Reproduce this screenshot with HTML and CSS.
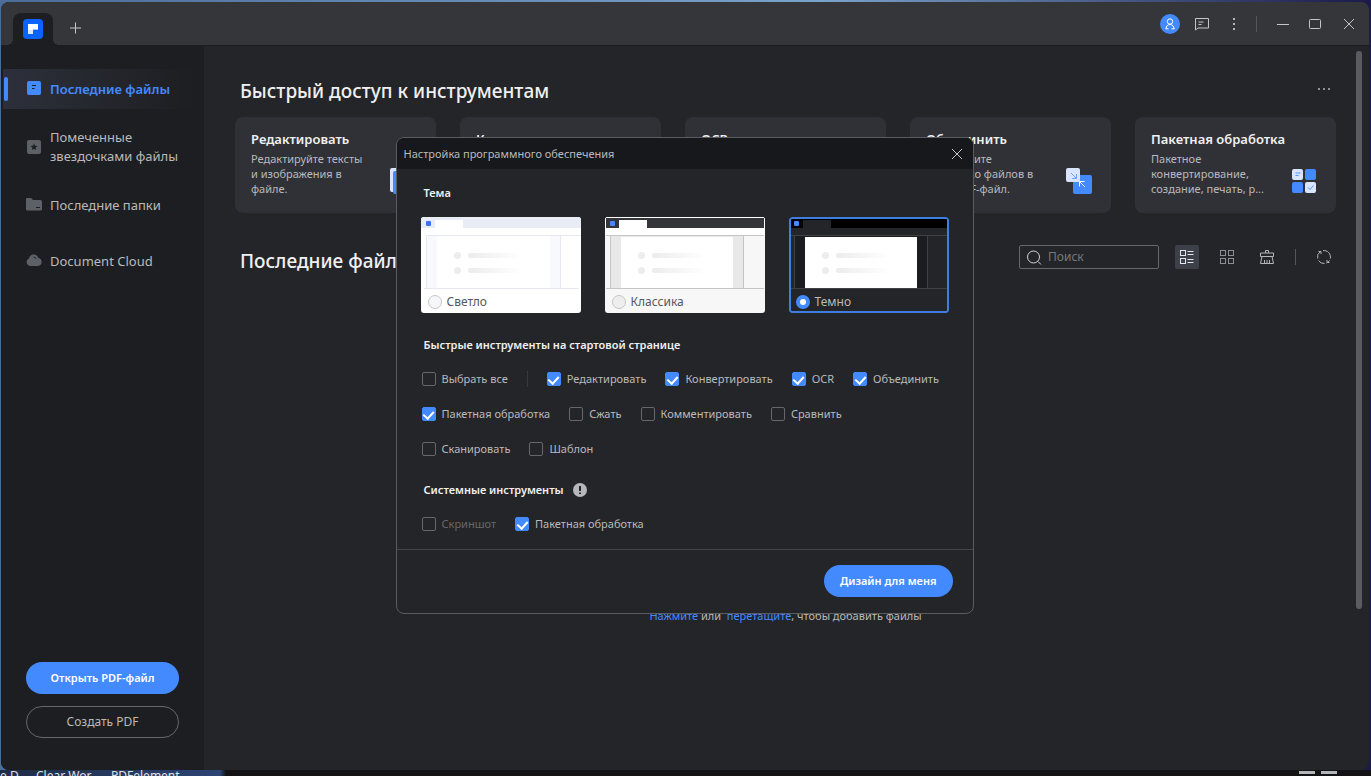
FILE: index.html
```html
<!DOCTYPE html>
<html lang="ru">
<head>
    <meta charset="UTF-8">
    <meta name="viewport" content="width=device-width, initial-scale=1.0">
    <title>PDFelement</title>
    <link rel="stylesheet" href="styles.css">
</head>
<body>
    <div class="window">
        <header class="titlebar">
            <div class="tab">
                <svg width="20" height="20" viewBox="0 0 20 20">
                    <rect width="20" height="20" rx="4" fill="#0a63ff"/>
                    <path d="M5 5h10v6H5z" fill="#fff"/>
                    <path d="M5 11h5v4H5z" fill="#dbe7ff"/>
                    <path d="M10 10h5v1h-5z" fill="#9dc0ff"/>
                </svg>
            </div>
            <button class="icon-button new-tab" aria-label="Новая вкладка">
                <svg width="12" height="12" viewBox="0 0 12 12"><path d="M6.500 0.500v11M1 6h11" stroke="#c4c5c7" fill="none"/></svg>
            </button>
            <div class="window-actions">
                <button class="icon-button avatar" aria-label="Профиль">
                    <svg width="20" height="20" viewBox="0 0 20 20" fill="none" stroke="#fff">
                        <circle cx="10" cy="7.500" r="2.700"/>
                        <path d="M6 14.800c0-2.500 1.800-4.300 4-4.300s4 1.800 4 4.300M5.500 14.800h3M11.500 14.800h3"/>
                    </svg>
                </button>
                <button class="icon-button" aria-label="Сообщения">
                    <svg width="16" height="14" viewBox="0 0 16 14" fill="none" stroke="#c4c5c7">
                        <path d="M1.500 1.500h13v9.500h-10.500l-2.500 2zM4.500 5h5M4.500 7.500h3"/>
                    </svg>
                </button>
                <button class="icon-button" aria-label="Меню">
                    <svg width="4" height="14" viewBox="0 0 4 14" fill="#b4b5b8"><rect x="1" y="1" width="2" height="2"/><rect x="1" y="6" width="2" height="2"/><rect x="1" y="11" width="2" height="2"/></svg>
                </button>
                <span class="divider"></span>
                <button class="icon-button" aria-label="Свернуть">
                    <svg width="12" height="12" viewBox="0 0 12 12" stroke="#c4c5c7"><path d="M0 6.500h12"/></svg>
                </button>
                <button class="icon-button" aria-label="Развернуть">
                    <svg width="12" height="12" viewBox="0 0 12 12" fill="none" stroke="#c4c5c7"><rect x="0.500" y="1.500" width="11" height="9" rx="1"/></svg>
                </button>
                <button class="icon-button" aria-label="Закрыть">
                    <svg width="12" height="12" viewBox="0 0 12 12" stroke="#c4c5c7"><path d="M1 1l10 10M11 1L1 11"/></svg>
                </button>
            </div>
        </header>

        <div class="content">
            <aside class="sidebar">
                <nav>
                    <a href="#" class="nav-item active">
                        <svg width="16" height="16" viewBox="0 0 16 16"><rect x="1" y="0" width="14" height="14" rx="2" fill="#448aff"/><path d="M6 4.500h4M6 7.500h2.500" stroke="#1d1e21" fill="none"/></svg>
                        <span>Последние файлы</span>
                    </a>
                    <a href="#" class="nav-item">
                        <svg width="16" height="16" viewBox="0 0 16 16"><rect x="1" y="1" width="14" height="14" rx="2" fill="#5d6067"/><path d="M8 4.500l1 2.300 2.500.2-1.900 1.600.6 2.400L8 9.700 5.800 11l.6-2.400L4.500 7 7 6.800z" fill="#1d1e21"/></svg>
                        <span>Помеченные звездочками файлы</span>
                    </a>
                    <a href="#" class="nav-item">
                        <svg width="16" height="16" viewBox="0 0 16 16"><path d="M0 2q0-1 1-1h4L7 3h7.500q1.500 0 1.500 1.500V12q0 1.500-1.500 1.500h-13Q0 13.500 0 12z" fill="#5d6067"/><path d="M10 10.500h4" stroke="#1d1e21"/></svg>
                        <span>Последние папки</span>
                    </a>
                    <a href="#" class="nav-item">
                        <svg width="16" height="16" viewBox="0 0 16 16"><path d="M4 13a4 4 0 0 1-1-7.600C3.500 3 5.300 1.500 7.700 1.500c2.300 0 4.100 1.400 4.700 3.400A4.100 4.100 0 0 1 12 13z" fill="#5d6067"/><path d="M7.500 4q2 .200 2.800 2" stroke="#1d1e21" fill="none"/></svg>
                        <span>Document Cloud</span>
                    </a>
                </nav>
                <div class="sidebar-buttons">
                    <button class="pill primary">Открыть PDF-файл</button>
                    <button class="pill outline">Создать PDF</button>
                </div>
            </aside>

            <main class="main">
                <div class="section-head">
                    <h1>Быстрый доступ к инструментам</h1>
                    <button class="icon-button more" aria-label="Ещё">
                        <svg width="14" height="2" viewBox="0 0 14 2" fill="#8f9094"><rect width="2" height="2" x="1"/><rect width="2" height="2" x="6"/><rect width="2" height="2" x="11"/></svg>
                    </button>
                </div>

                <div class="tools">
                    <article class="tool">
                        <div class="tool-text">
                            <h2>Редактировать</h2>
                            <p>Редактируйте тексты и изображения в файле.</p>
                        </div>
                        <svg width="27" height="26" viewBox="0 0 27 26"><rect width="18" height="24" rx="2" fill="#d9e4ff"/><rect x="3" y="3" width="21" height="23" rx="2" fill="#448aff"/></svg>
                    </article>
                    <article class="tool">
                        <div class="tool-text">
                            <h2>Конвертировать</h2>
                        </div>
                    </article>
                    <article class="tool">
                        <div class="tool-text">
                            <h2>OCR</h2>
                        </div>
                    </article>
                    <article class="tool">
                        <div class="tool-text">
                            <h2>Объединить</h2>
                            <p>Объедините несколько файлов в один PDF-файл.</p>
                        </div>
                        <svg width="26" height="26" viewBox="0 0 26 26" fill="none">
                            <rect x="7" y="7" width="19" height="19" rx="2" fill="#448aff"/>
                            <rect width="14" height="14" rx="2" fill="#d9e4ff"/>
                            <path d="M5 5l5 5M10.500 6v4.500H6" stroke="#6f9ff5"/>
                            <path d="M19 19l-5-5M13.500 18.500v-5h5" stroke="#fff"/>
                        </svg>
                    </article>
                    <article class="tool">
                        <div class="tool-text">
                            <h2>Пакетная обработка</h2>
                            <p>Пакетное конвертирование, создание, печать, р...</p>
                        </div>
                        <svg width="26" height="26" viewBox="0 0 26 26" fill="none">
                            <rect x="1" y="1" width="11" height="11" rx="2" fill="#d9e4ff"/>
                            <rect x="14" y="1" width="11" height="11" rx="2" fill="#448aff"/>
                            <rect x="1" y="14" width="11" height="11" rx="2" fill="#448aff"/>
                            <rect x="14" y="14" width="11" height="11" rx="2" fill="#d9e4ff"/>
                            <path d="M4.500 5h5M4.500 7.500h3M17 19.500l2 2 3.500-4" stroke="#5a93f7"/>
                        </svg>
                    </article>
                </div>

                <div class="section-head files-head">
                    <h1>Последние файлы</h1>
                    <div class="toolbar">
                        <label class="search">
                            <svg width="16" height="16" viewBox="0 0 16 16" fill="none" stroke="#d4d5d7"><circle cx="7.500" cy="8" r="6"/><path d="M12 12.500l3 3"/></svg>
                            <input type="search" placeholder="Поиск" aria-label="Поиск">
                        </label>
                        <button class="tool-button selected" aria-label="Список">
                            <svg width="16" height="16" viewBox="0 0 16 16" fill="none" stroke="#e4e5e7"><rect x="1.500" y="1.500" width="5" height="5"/><rect x="1.500" y="9.500" width="5" height="5"/><path d="M8.500 2.500h6M8.500 5.500h6M8.500 10.500h6M8.500 13.500h6"/></svg>
                        </button>
                        <button class="tool-button" aria-label="Плитка">
                            <svg width="16" height="16" viewBox="0 0 16 16" fill="none" stroke="#8d8f94"><rect x="1.500" y="1.500" width="5" height="5"/><rect x="9.500" y="1.500" width="5" height="5"/><rect x="1.500" y="9.500" width="5" height="5"/><rect x="9.500" y="9.500" width="5" height="5"/></svg>
                        </button>
                        <button class="tool-button" aria-label="Очистить">
                            <svg width="16" height="16" viewBox="0 0 16 16" fill="none" stroke="#b4b5b8"><path d="M6.500 4V1.500h3V4M1.500 7.500V4h13v3.500zM3 7.500L1.500 14.500h13L13 7.500M5.500 14.500V11M8 14.500V11M10.500 14.500V11"/></svg>
                        </button>
                        <span class="divider"></span>
                        <button class="tool-button" aria-label="Обновить">
                            <svg width="16" height="16" viewBox="0 0 16 16" fill="none" stroke="#b4b5b8"><path d="M1.700 9.500A6.500 6.500 0 0 1 4.500 2.500M7 1.600A6.500 6.500 0 0 1 14.300 9.500M13.500 11.500A6.500 6.500 0 0 1 10.500 14M8.500 14.500A6.500 6.500 0 0 1 2.500 11.500M2.500 2.500h2.500v2.500M13.500 13.500H11V11"/></svg>
                        </button>
                    </div>
                </div>

                <p class="empty"><a href="#">Нажмите</a> или &nbsp;<a href="#">перетащите</a>, чтобы добавить файлы</p>
                <div class="scrollbar"></div>
            </main>
        </div>
    </div>

    <footer class="taskbar">
        <span>e D</span>
        <span class="task">Clear Wor</span>
        <span class="task wide">PDFelement</span>
        <i class="tray"></i>
        <i class="tray"></i>
    </footer>

    <div class="overlay">
        <form class="dialog" role="dialog" aria-labelledby="dialog-title">
            <div class="dialog-head">
                <span id="dialog-title">Настройка программного обеспечения</span>
                <button type="button" class="icon-button" aria-label="Закрыть">
                    <svg width="12" height="12" viewBox="0 0 12 12" stroke="#c4c5c7"><path d="M1 1l10 10M11 1L1 11"/></svg>
                </button>
            </div>

            <div class="dialog-body">
                <h3>Тема</h3>
                <div class="themes">
                    <label class="theme light">
                        <svg viewBox="0 0 160 72">
                            <rect width="160" height="72" fill="#fff"/>
                            <rect width="160" height="11" fill="#e8ecf5"/>
                            <rect x="14" y="3" width="28" height="9" fill="#fff"/>
                            <rect x="5" y="4" width="5" height="5" rx="1" fill="#3a75f0"/>
                            <path d="M5 18.500h155M5.500 18v53M139.500 18v53M3 71.500h155" stroke="#e6e8ee"/>
                            <rect x="6" y="19" width="10" height="52" fill="#f8f9fc"/>
                            <rect x="129" y="19" width="10" height="52" fill="#f8f9fc"/>
                            <use href="#lines"/>
                        </svg>
                        <span class="theme-name"><input type="radio" name="theme">Светло</span>
                    </label>
                    <label class="theme classic">
                        <svg viewBox="0 0 160 72">
                            <rect width="160" height="72" fill="#f7f7f8"/>
                            <rect width="160" height="18" fill="#fff"/>
                            <rect x="1" y="1" width="158" height="10" fill="#343539"/>
                            <rect x="14" y="3" width="28" height="9" fill="#fff"/>
                            <rect x="5" y="4" width="5" height="5" rx="1" fill="#448aff"/>
                            <rect x="5" y="18" width="134" height="53" fill="#e8e8e8"/>
                            <rect x="16" y="20" width="112" height="51" fill="#fff"/>
                            <path d="M1 18.500h158M5.500 18v53M138.500 18v53M1 71.500h158" stroke="#c4c5c7"/>
                            <use href="#lines"/>
                        </svg>
                        <span class="theme-name"><input type="radio" name="theme">Классика</span>
                    </label>
                    <label class="theme dark">
                        <svg viewBox="0 0 160 72">
                            <defs>
                                <linearGradient id="fade"><stop stop-color="#ececec"/><stop offset="1" stop-color="#fff"/></linearGradient>
                                <g id="lines">
                                    <circle cx="36.500" cy="38.500" r="3.500" fill="#ededee"/>
                                    <circle cx="36.500" cy="53.500" r="3.500" fill="#ededee"/>
                                    <rect x="47" y="36" width="54" height="5" rx="2" fill="url(#fade)"/>
                                    <rect x="47" y="51" width="54" height="5" rx="2" fill="url(#fade)"/>
                                </g>
                            </defs>
                            <rect width="160" height="72" fill="#242529"/>
                            <rect width="160" height="11" fill="#000"/>
                            <rect x="14" y="3" width="28" height="9" fill="#242529"/>
                            <rect x="5" y="4" width="5" height="5" rx="1" fill="#448aff"/>
                            <rect x="5" y="18" width="134" height="53" fill="#1b1c1f"/>
                            <path d="M1 18.500h158M5.500 18v53M138.500 18v53M1 71.500h158" stroke="#3f4044"/>
                            <rect x="16" y="20" width="112" height="51" fill="#fff"/>
                            <use href="#lines"/>
                        </svg>
                        <span class="theme-name"><input type="radio" name="theme" checked>Темно</span>
                    </label>
                </div>

                <h3>Быстрые инструменты на стартовой странице</h3>
                <div class="checks">
                    <label><input type="checkbox">Выбрать все</label>
                    <span class="divider"></span>
                    <label><input type="checkbox" checked>Редактировать</label>
                    <label><input type="checkbox" checked>Конвертировать</label>
                    <label><input type="checkbox" checked>OCR</label>
                    <label><input type="checkbox" checked>Объединить</label>
                    <label><input type="checkbox" checked>Пакетная обработка</label>
                    <label><input type="checkbox">Сжать</label>
                    <label><input type="checkbox">Комментировать</label>
                    <label><input type="checkbox">Сравнить</label>
                    <label><input type="checkbox">Сканировать</label>
                    <label><input type="checkbox">Шаблон</label>
                </div>

                <h3>Системные инструменты
                    <svg width="14" height="14" viewBox="0 0 14 14"><circle cx="7" cy="7" r="7" fill="#b6b7ba"/><path d="M7 3v5M7 9.500v1.500" stroke="#242529" stroke-width="2"/></svg>
                </h3>
                <div class="checks">
                    <label class="disabled"><input type="checkbox" disabled>Скриншот</label>
                    <label><input type="checkbox" checked>Пакетная обработка</label>
                </div>
            </div>

            <div class="dialog-foot">
                <button type="button" class="pill primary">Дизайн для меня</button>
            </div>
        </form>
    </div>
</body>
</html>
```

FILE: styles.css
```css
* {
    box-sizing: border-box;
}

body {
    margin: 0;
    padding: 2px 2px 0 1px;
    height: 100vh;
    display: flex;
    flex-direction: column;
    overflow: hidden;
    background: linear-gradient(90deg, #4b6d99, #7aa3c9 60%, #1c1a4a);
    color: #b9babc;
    font-family: "Noto Sans", sans-serif;
    font-size: 12px;
    line-height: 16px;
}

h1, h2, h3, p {
    margin: 0;
}

a {
    color: #448aff;
    text-decoration: none;
}

button, input {
    font: inherit;
    color: inherit;
}

button {
    border: none;
    background: none;
    padding: 0;
    cursor: pointer;
}

svg {
    flex: none;
    display: block;
}

.window {
    flex: 1;
    min-height: 0;
    display: flex;
    flex-direction: column;
    background-color: #242529;
    border-radius: 8px;
    overflow: hidden;
}

/* title bar */
.titlebar {
    height: 44px;
    display: flex;
    align-items: center;
    padding: 0 10px 0 12px;
    background-color: #353639;
    border-bottom: 1px solid #1c1d20;
}

.tab {
    position: relative;
    align-self: flex-end;
    width: 40px;
    height: 32px;
    display: flex;
    justify-content: center;
    padding-top: 6px;
    background-color: #1d1e21;
    border-radius: 8px 8px 0 0;
}

.tab::before,
.tab::after {
    content: "";
    position: absolute;
    bottom: 0;
    width: 6px;
    height: 6px;
}

.tab::before {
    right: 100%;
    background: radial-gradient(circle at 0 0, #353639 6px, #1d1e21 6px);
}

.tab::after {
    left: 100%;
    background: radial-gradient(circle at 100% 0, #353639 6px, #1d1e21 6px);
}

.icon-button {
    width: 20px;
    height: 20px;
    display: flex;
    align-items: center;
    justify-content: center;
}

.new-tab {
    margin-left: 12px;
    margin-top: 8px;
}

.window-actions {
    margin-left: auto;
    display: flex;
    align-items: center;
    gap: 12px;
}

.avatar {
    border-radius: 50%;
    background-color: #448aff;
}

.divider {
    width: 1px;
    height: 16px;
    background-color: #55565b;
}

.window-actions .divider {
    margin-right: 4px;
}

.window-actions .icon-button:last-child {
    margin-left: 2px;
}

/* sidebar */
.content {
    flex: 1;
    min-height: 0;
    display: flex;
}

.sidebar {
    width: 203px;
    flex: none;
    display: flex;
    flex-direction: column;
    justify-content: space-between;
    padding: 23px 0 32px 2px;
    background-color: #1d1e21;
}

nav {
    display: flex;
    flex-direction: column;
    gap: 16px;
}

.nav-item {
    min-height: 40px;
    display: flex;
    align-items: center;
    gap: 8px;
    padding: 3px 16px 3px 23px;
    color: #b9babc;
    font-size: 13px;
    line-height: 19px;
}

.nav-item.active {
    position: relative;
    color: #448aff;
    font-weight: 600;
    background: linear-gradient(90deg, #2d303b, #1d1e21 95%);
}

.nav-item.active::before {
    content: "";
    position: absolute;
    left: 1px;
    top: 8px;
    bottom: 8px;
    width: 4px;
    border-radius: 2px;
    background-color: #448aff;
}

.sidebar-buttons {
    display: flex;
    flex-direction: column;
    gap: 12px;
    padding: 0 25px 0 23px;
}

.pill {
    height: 32px;
    padding: 0 16px;
    border-radius: 16px;
}

.primary {
    background-color: #448aff;
    color: #fff;
    font-size: 11px;
    font-weight: 600;
}

.outline {
    border: 1px solid #66676b;
}

/* main area */
.main {
    flex: 1;
    position: relative;
    padding: 32px 33px 0 31px;
}

.section-head {
    display: flex;
    justify-content: space-between;
    padding-left: 5px;
}

h1 {
    color: #f0f0f1;
    font-size: 19px;
    font-weight: 500;
    line-height: 26px;
}

.more {
    margin: 1px 2px 0 0;
}

.tools {
    display: grid;
    grid-template-columns: repeat(5, 1fr);
    gap: 24px;
    margin-top: 13px;
}

.tool {
    height: 96px;
    display: flex;
    justify-content: space-between;
    align-items: flex-end;
    padding: 12px 19px 19px 16px;
    border-radius: 8px;
    background-color: #303136;
}

.tool-text {
    align-self: flex-start;
    max-width: 118px;
}

.tool h2 {
    color: #f0f0f1;
    font-size: 13px;
    font-weight: 600;
    line-height: 20px;
    white-space: nowrap;
}

.tool p {
    font-size: 11px;
    line-height: 15px;
    margin-top: 2px;
}

.files-head {
    margin-top: 32px;
}

.files-head h1 {
    line-height: 32px;
}

.toolbar {
    display: flex;
    align-items: flex-start;
    gap: 16px;
}

.toolbar .divider {
    margin-top: 4px;
}

.search {
    width: 140px;
    height: 24px;
    display: flex;
    align-items: center;
    gap: 6px;
    padding: 0 6px;
    border: 1px solid #66676b;
    border-radius: 2px;
}

.search input {
    min-width: 0;
    flex: 1;
    border: none;
    outline: none;
    padding: 0;
    background: none;
}

.search input::placeholder {
    color: #77787c;
}

.tool-button {
    width: 24px;
    height: 24px;
    display: flex;
    align-items: center;
    justify-content: center;
    border-radius: 2px;
}

.tool-button.selected {
    background-color: #3d4048;
}

.empty {
    margin-top: 331px;
    text-align: center;
    font-size: 11px;
}

.scrollbar {
    position: absolute;
    top: 5px;
    right: 7px;
    width: 6px;
    height: 558px;
    border-radius: 3px;
    background-color: #5a5c61;
}

/* desktop taskbar under the window */
.taskbar {
    height: 6px;
    margin: 0 -2px 0 -1px;
    padding-right: 34px;
    display: flex;
    overflow: hidden;
    background: linear-gradient(90deg, #1f2c48, #2c4374 220px, #131315 226px);
    color: #e0e0e0;
}

.taskbar span {
    width: 36px;
    white-space: nowrap;
    line-height: 12px;
}

.taskbar .task {
    width: 75px;
}

.taskbar .wide {
    width: 110px;
    margin-right: auto;
}

.tray {
    width: 16px;
    height: 3px;
    margin: 1px 0 0 6px;
    background-color: #b4b5b8;
}

/* settings dialog */
.overlay {
    position: fixed;
    inset: 0;
    display: flex;
    justify-content: center;
    align-items: flex-start;
    padding: 137px 2px 0 0;
}

.dialog {
    width: 578px;
    border: 1px solid #5b5c60;
    border-radius: 8px;
    background-color: #242529;
    font-size: 11px;
    overflow: hidden;
}

.dialog-head {
    height: 31px;
    display: flex;
    align-items: center;
    justify-content: space-between;
    padding: 0 6px 0 7px;
    background-color: #17181b;
}

.dialog-body {
    padding: 16px 24px 17px;
}

h3 {
    display: flex;
    align-items: center;
    gap: 9px;
    padding-left: 3px;
    color: #f0f0f1;
    font-size: 11px;
    font-weight: 600;
    line-height: 16px;
}

.themes {
    display: flex;
    gap: 24px;
    margin: 16px 0 24px;
}

.theme {
    position: relative;
    width: 160px;
    height: 96px;
    border-radius: 3px;
    overflow: hidden;
}

.theme svg {
    width: 160px;
    height: 72px;
}

.theme-name {
    height: 24px;
    display: flex;
    align-items: center;
    gap: 5px;
    padding: 2px 0 0 7px;
    font-size: 12px;
}

.light .theme-name,
.classic .theme-name {
    background-color: #fff;
    color: #56575b;
}

.classic .theme-name {
    background-color: #f7f7f8;
}

.dark::after {
    content: "";
    position: absolute;
    inset: 0;
    border: 2px solid #3f7de0;
    border-radius: 3px;
}

input[type="radio"],
input[type="checkbox"] {
    appearance: none;
    width: 14px;
    height: 14px;
    margin: 0;
    flex: none;
    border: 1px solid #66676b;
    border-radius: 2px;
}

input[type="radio"] {
    border-color: #c4c5c9;
    border-radius: 50%;
    background-color: #f6f7f9;
}

.classic input[type="radio"] {
    background-color: #eeeeee;
}

input[type="radio"]:checked {
    border: 4px solid #448aff;
    background-color: #fff;
}

input[type="checkbox"]:checked {
    display: flex;
    justify-content: center;
    border-color: #448aff;
    background-color: #448aff;
}

input[type="checkbox"]:checked::after {
    content: "";
    width: 5px;
    height: 8px;
    margin-top: 1px;
    border: solid #fff;
    border-width: 0 2px 2px 0;
    transform: rotate(42deg);
}

.checks {
    display: flex;
    flex-wrap: wrap;
    gap: 19px;
    margin: 18px 3px 0 1px;
}

.checks + h3 {
    margin-top: 25px;
}

.checks label {
    display: flex;
    align-items: center;
    gap: 6px;
}

.checks .divider {
    background-color: #38393d;
}

.checks .disabled {
    color: #66676b;
}

.dialog-foot {
    display: flex;
    justify-content: flex-end;
    padding: 15px 20px 16px;
    border-top: 1px solid #44454a;
}
```
